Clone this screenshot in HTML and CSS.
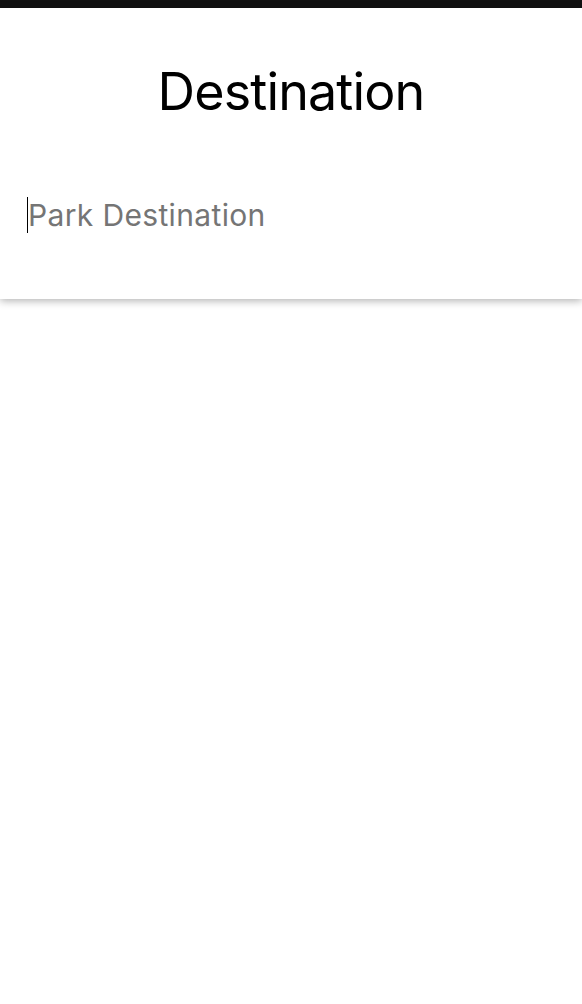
FILE: index.html
```html
<!DOCTYPE html>
<html>
<head>
<meta charset="utf-8">
<link rel="stylesheet" href="styles.css">
</head>
<body>
<div class="topbar"></div>
<header class="panel">
  <h1 class="title">Destination</h1>
  <div class="field">
    <span class="caret"></span>
    <span class="placeholder">Park Destination</span>
  </div>
</header>
</body>
</html>
```
FILE: styles.css
```css
html, body {
  margin: 0;
  padding: 0;
  background: #fff;
  font-family: Inter, "Noto Sans", sans-serif;
}
body {
  min-height: 1004px;
}
.topbar {
  height: 8px;
  background: #111111;
}
.panel {
  display: block;
  height: 291px;
  background: #ffffff;
  box-shadow: 0 2px 8px 0 rgba(0, 0, 0, 0.3);
  position: relative;
  z-index: 1;
}
.title {
  margin: 0;
  padding-top: 54px;
  text-align: center;
  font-weight: 400;
  font-size: 52px;
  line-height: 60px;
  color: #000;
  letter-spacing: -0.85px;
}
.field {
  display: flex;
  align-items: center;
  margin-top: 75px;
  padding-left: 27px;
  height: 36px;
}
.caret {
  width: 1px;
  height: 36px;
  background: #000;
}
.placeholder {
  font-size: 30px;
  color: #757575;
  line-height: 36px;
  letter-spacing: 0.35px;
}
```
